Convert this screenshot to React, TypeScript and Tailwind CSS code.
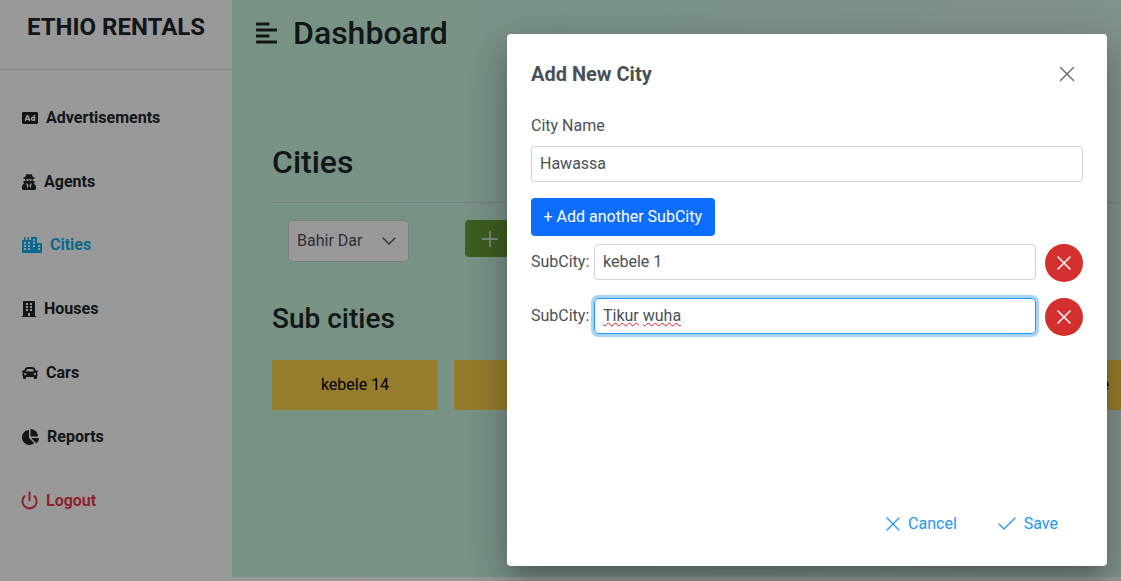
import { FaAd, FaAlignLeft, FaBuilding, FaCar, FaChartPie, FaCity, FaUserSecret } from "react-icons/fa";
import { Check, Plus, Power, X } from "lucide-react";
import type { ReactNode } from "react";

const navItems: { label: string; icon: ReactNode; tone: string; gap: string }[] = [
  { label: "Advertisements", icon: <FaAd className="w-4 h-4" />, tone: "text-[#212529]", gap: "gap-2" },
  { label: "Agents", icon: <FaUserSecret className="w-3.5 h-4" />, tone: "text-[#212529]", gap: "gap-2" },
  { label: "Cities", icon: <FaCity className="w-5 h-4" />, tone: "text-[#0db0f0]", gap: "gap-2" },
  { label: "Houses", icon: <FaBuilding className="w-3.5 h-4" />, tone: "text-[#212529]", gap: "gap-2" },
  { label: "Cars", icon: <FaCar className="w-4 h-4" />, tone: "text-[#212529]", gap: "gap-2" },
  { label: "Reports", icon: <FaChartPie className="w-[17px] h-4" />, tone: "text-[#212529]", gap: "gap-2" },
  { label: "Logout", icon: <Power className="w-[19px] h-[19px] -ml-[2px]" strokeWidth={2.6} />, tone: "text-[#ed3a4c]", gap: "gap-[7px]" },
];

const subCities = ["kebele 14", "Piassa", "Tabor", "Addis", "Shashe"];

function SubCityRow({ children, focused }: { children: ReactNode; focused?: boolean }) {
  return (
    <div className="flex items-start h-[38px]">
      <span className="w-[63px] h-9 flex items-center shrink-0 text-[#495057]">SubCity:</span>
      <div
        className={
          focused
            ? "w-[442px] h-9 px-2 flex items-center rounded-[4px] border border-[#2196f3] ring-[3px] ring-[#a6d5fa] text-[#495057]"
            : "w-[442px] h-9 px-2 flex items-center rounded-[4px] border border-[#ced4da] text-[#495057]"
        }
      >
        {children}
      </div>
      <button className="ml-[9px] w-[38px] h-[38px] rounded-full bg-[#d32f2f] text-white flex items-center justify-center">
        <X className="w-6 h-6" strokeWidth={1.5} />
      </button>
    </div>
  );
}

export default function App() {
  return (
    <div className="relative h-[581px] overflow-hidden bg-white font-['Roboto',sans-serif] text-[#212529]">
      <div className="flex h-[577px]">
        {/* Sidebar */}
        <aside className="w-[232px] shrink-0">
          <div className="h-[70px] border-b border-[#dee2e6] pt-[10px] text-center">
            <h1 className="text-2xl leading-[34px] font-bold text-[#212529]">ETHIO RENTALS</h1>
          </div>
          <nav className="pl-[22px] pt-4">
            {navItems.map((item) => (
              <div key={item.label} className={`flex items-center h-[63.8px] font-bold ${item.gap} ${item.tone}`}>
                {item.icon}
                <span>{item.label}</span>
              </div>
            ))}
          </nav>
        </aside>

        {/* Main */}
        <main className="flex-1 min-w-0 overflow-hidden bg-gradient-to-r from-[#c5f5da] to-[#d8f5ec]">
          <div className="flex items-center h-[66px] pl-6">
            <FaAlignLeft className="w-[21px] h-6" />
            <h2 className="ml-4 text-[32px] leading-[38px] font-medium">Dashboard</h2>
          </div>
          <div className="pl-10 pt-[77px]">
            <h3 className="text-[32px] leading-[38px] font-medium">Cities</h3>
            <hr className="mt-[21px] border-[#c9cfd2]" />
            <div className="flex items-start mt-[17px] pl-4">
              <div className="w-[121px] h-[42px] pl-2 pr-[11px] flex items-center justify-between rounded-[4px] border border-[#ced4da] bg-white text-[#495057]">
                <span>Bahir Dar</span>
                <svg viewBox="0 0 16 16" className="w-4 h-4" fill="none" stroke="currentColor" strokeWidth="1.4" strokeLinecap="round" strokeLinejoin="round">
                  <path d="M2 5l6 6 6-6" />
                </svg>
              </div>
              <button className="ml-14 w-[120px] h-[37px] pl-[11.5px] rounded-[4px] bg-[#689f38] text-white flex items-center">
                <Plus className="w-[26px] h-[26px]" strokeWidth={1.25} />
              </button>
            </div>
            <h3 className="mt-10 text-[28px] leading-[34px] font-medium">Sub cities</h3>
            <div className="flex gap-4 mt-6">
              {subCities.map((name) => (
                <div key={name} className="w-[166px] h-[50px] shrink-0 bg-[#fbd14b] text-black flex items-center justify-center">
                  {name}
                </div>
              ))}
            </div>
          </div>
        </main>
      </div>

      {/* Modal */}
      <div className="absolute inset-0 bg-black/40 pl-[507px] pt-[34px]">
        <div className="w-[600px] h-[532px] rounded-[4px] bg-white text-[#495057] flex flex-col shadow-[0_11px_15px_-7px_rgba(0,0,0,0.2),0_24px_38px_3px_rgba(0,0,0,0.14),0_9px_46px_8px_rgba(0,0,0,0.12)]">
          <div className="flex items-center justify-between pl-6 pr-[27px] pt-[27px]">
            <h4 className="text-xl leading-[26px] font-bold">Add New City</h4>
            <X className="w-[26px] h-[26px] text-[#6c757d]" strokeWidth={1.4} />
          </div>
          <div className="px-6 pt-[29px] flex-1">
            <label className="block leading-[19px] text-[#495057]">City Name</label>
            <div className="mt-[11px] h-9 px-2 flex items-center rounded-[4px] border border-[#ced4da]">Hawassa</div>
            <button className="mt-4 h-[38px] px-[12.5px] rounded-[4px] bg-[#0d6efd] text-white">+ Add another SubCity</button>
            <div className="mt-2 flex flex-col gap-4">
              <SubCityRow>kebele 1</SubCityRow>
              <SubCityRow focused>
                <span className="underline decoration-wavy decoration-[#e01b24] decoration-1 underline-offset-1">Tikur</span>
                <span className="whitespace-pre"> </span>
                <span className="underline decoration-wavy decoration-[#e01b24] decoration-1 underline-offset-1">wuha</span>
              </SubCityRow>
            </div>
          </div>
          <div className="flex justify-end items-center pr-[49px] pb-[30px] text-[#2196f3]">
            <span className="flex items-center gap-[3.5px]">
              <X className="w-6 h-6" strokeWidth={1.25} />
              Cancel
            </span>
            <span className="ml-[38px] flex items-center gap-[5px]">
              <Check className="w-6 h-6" strokeWidth={1.25} />
              Save
            </span>
          </div>
        </div>
      </div>
    </div>
  );
}
